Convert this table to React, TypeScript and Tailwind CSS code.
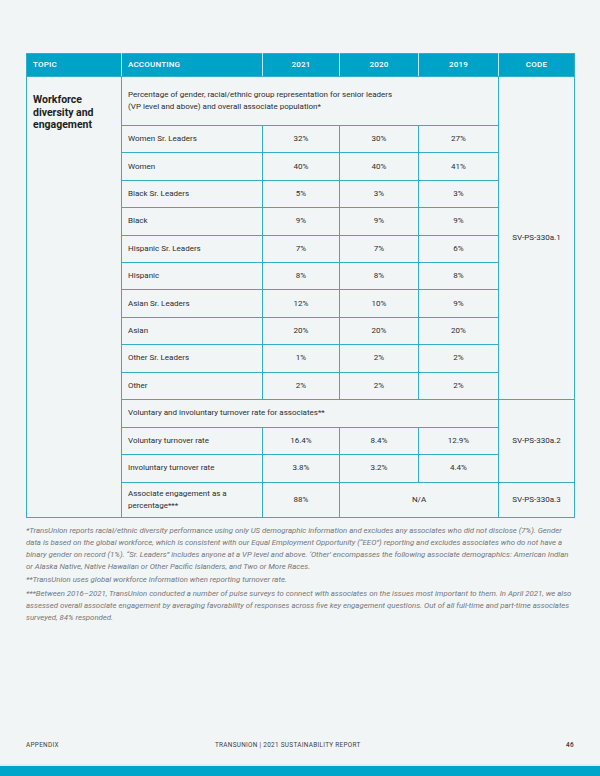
const rows: [string, string, string, string][] = [
  ["Women Sr. Leaders", "32%", "30%", "27%"],
  ["Women", "40%", "40%", "41%"],
  ["Black Sr. Leaders", "5%", "3%", "3%"],
  ["Black", "9%", "9%", "9%"],
  ["Hispanic Sr. Leaders", "7%", "7%", "6%"],
  ["Hispanic", "8%", "8%", "8%"],
  ["Asian Sr. Leaders", "12%", "10%", "9%"],
  ["Asian", "20%", "20%", "20%"],
  ["Other Sr. Leaders", "1%", "2%", "2%"],
  ["Other", "2%", "2%", "2%"],
];

const cell = "border border-[#36adc7] px-[6px] align-middle";
const num = "border border-[#36adc7] text-center align-middle";

export default function App() {
  return (
    <div
      className="h-[776px] w-[600px] flex flex-col bg-[#f2f5f6] text-[#2a2d30] overflow-hidden"
      style={{ fontFamily: "Roboto, 'Liberation Sans', sans-serif" }}
    >
      <div className="px-[26px] pt-[53px]">
        <table className="w-[548px] table-fixed border-collapse text-[8px] leading-[12px]">
          <colgroup>
            <col className="w-[95px]" />
            <col className="w-[141px]" />
            <col className="w-[77px]" />
            <col className="w-[79px]" />
            <col className="w-[80px]" />
            <col className="w-[76px]" />
          </colgroup>
          <thead>
            <tr className="h-[23px] bg-[#00a3c8] text-white uppercase tracking-[0.2px]">
              <th className="border border-[#36adc7] border-r-[#bfe5ee] px-[6px] text-left font-medium">Topic</th>
              <th className="border border-[#36adc7] border-r-[#bfe5ee] px-[6px] text-left font-medium">Accounting</th>
              <th className="border border-[#36adc7] border-r-[#bfe5ee] text-center font-medium">2021</th>
              <th className="border border-[#36adc7] border-r-[#bfe5ee] text-center font-medium">2020</th>
              <th className="border border-[#36adc7] border-r-[#bfe5ee] text-center font-medium">2019</th>
              <th className="border border-[#36adc7] text-center font-medium">Code</th>
            </tr>
          </thead>
          <tbody>
            <tr className="h-[49px]">
              <td rowSpan={15} className="border border-[#36adc7] px-[6px] pt-[17px] align-top">
                <div className="text-[10.5px] leading-[12.7px] font-bold text-[#1c1f22]">
                  Workforce diversity and engagement
                </div>
              </td>
              <td colSpan={4} className={cell}>
                Percentage of gender, racial/ethnic group representation for senior leaders
                <br />
                (VP level and above) and overall associate population*
              </td>
              <td rowSpan={11} className={num}>SV-PS-330a.1</td>
            </tr>
            {rows.map(([label, a, b, c]) => (
              <tr key={label} className="h-[27.4px]">
                <td className={cell}>{label}</td>
                <td className={num}>{a}</td>
                <td className={num}>{b}</td>
                <td className={num}>{c}</td>
              </tr>
            ))}
            <tr className="h-[27.6px]">
              <td colSpan={4} className={cell}>Voluntary and involuntary turnover rate for associates**</td>
              <td rowSpan={3} className={num}>SV-PS-330a.2</td>
            </tr>
            <tr className="h-[27.6px]">
              <td className={cell}>Voluntary turnover rate</td>
              <td className={num}>16.4%</td>
              <td className={num}>8.4%</td>
              <td className={num}>12.9%</td>
            </tr>
            <tr className="h-[27.6px]">
              <td className={cell}>Involuntary turnover rate</td>
              <td className={num}>3.8%</td>
              <td className={num}>3.2%</td>
              <td className={num}>4.4%</td>
            </tr>
            <tr className="h-[35.5px]">
              <td className={cell}>
                Associate engagement as a
                <br />
                percentage***
              </td>
              <td className={num}>88%</td>
              <td colSpan={2} className={num}>N/A</td>
              <td className={num}>SV-PS-330a.3</td>
            </tr>
          </tbody>
        </table>

        <div className="mt-[7px] flex flex-col gap-[2px] text-[7.8px] leading-[11.8px] italic text-[#72777b]">
          <p>
            *TransUnion reports racial/ethnic diversity performance using only US demographic information and excludes any
            associates who did not disclose (7%). Gender data is based on the global workforce, which is consistent with our
            Equal Employment Opportunity (“EEO”) reporting and excludes associates who do not have a binary gender on record
            (1%). “Sr. Leaders” includes anyone at a VP level and above. ‘Other’ encompasses the following associate
            demographics: American Indian or Alaska Native, Native Hawaiian or Other Pacific Islanders, and Two or More Races.
          </p>
          <p>**TransUnion uses global workforce information when reporting turnover rate.</p>
          <p>
            ***Between 2016–2021, TransUnion conducted a number of pulse surveys to connect with associates on the issues most
            important to them. In April 2021, we also assessed overall associate engagement by averaging favorability of
            responses across five key engagement questions. Out of all full-time and part-time associates surveyed, 84%
            responded.
          </p>
        </div>
      </div>

      <div className="mt-auto">
        <div className="flex items-center px-[26px] pb-[13px] text-[6.4px] uppercase tracking-[0.3px] text-[#3d4145]">
          <span className="w-[189px]">Appendix</span>
          <span>TransUnion | 2021 Sustainability Report</span>
          <span className="ml-auto font-semibold">46</span>
        </div>
        <div className="h-[2px] bg-[#dff0f4]" />
        <div className="h-[10px] bg-[#00a5c9]" />
      </div>
    </div>
  );
}
